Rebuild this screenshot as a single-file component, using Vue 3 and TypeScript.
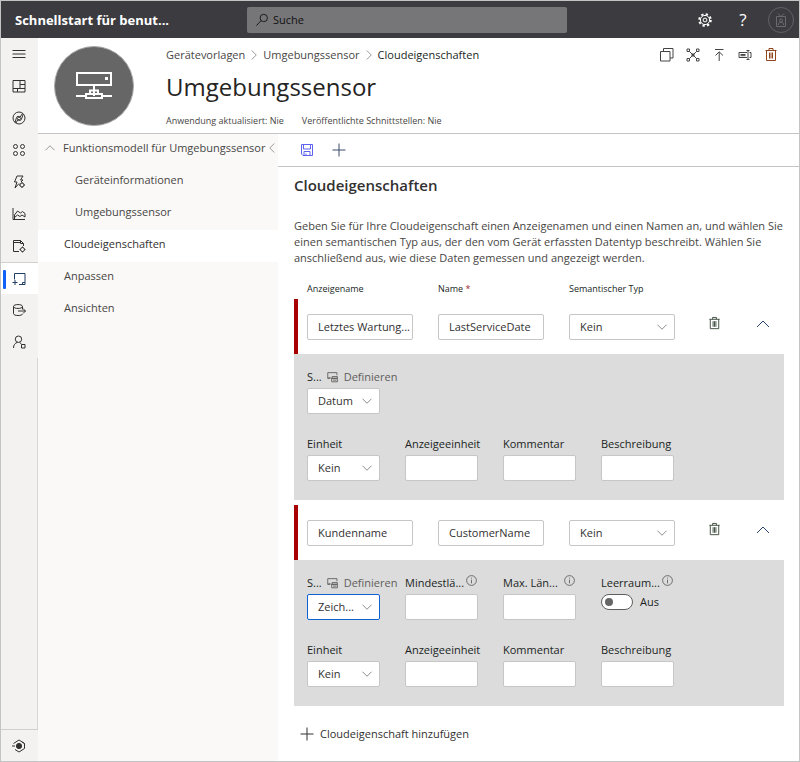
<script setup lang="ts">
import { ref } from 'vue'

interface RailItem { label: string; icon: string; active?: boolean }
interface NavItem { label: string; nested?: boolean; active?: boolean }
interface Field { label: string; kind: 'select' | 'text' | 'toggle'; value?: string; define?: boolean; info?: boolean; focused?: boolean }
interface Property { id: string; title: string; name: string; semantic: string; schema: Field[]; details: Field[] }

const icons: Record<string, string> = {
  menu: 'M1.5 4.5h13M1.5 8h13M1.5 11.5h13',
  dashboard: 'M2 2.5h12v11.5H2zM9 2.5v8M2 10.5h12M9 6.5h5M6.5 10.5v3.5',
  devices: 'M8 2a6 6 0 1 0 0 12a6 6 0 1 0 0-12M4 12.5l1.5-5c.5-1.5 2.5-1.5 3.5-.2l2.5-4M12.3 4l-2 5.500c-.8 1.600-2.600 1.200-3.400 0L5 13M6.500 8.500a1.500 1.500 0 1 0 3 0a1.500 1.500 0 1 0-3 0',
  groups: 'M4.500 2.500a2 2 0 1 0 0 4a2 2 0 1 0 0-4M11.500 2.500a2 2 0 1 0 0 4a2 2 0 1 0 0-4M4.500 9.500a2 2 0 1 0 0 4a2 2 0 1 0 0-4M11.500 9.500a2 2 0 1 0 0 4a2 2 0 1 0 0-4',
  rules: 'M12 2H6L3.500 8H6l-2 6l4-4.500M12 2L9.500 6H12l-2 2M11 9a2 2 0 1 0 0 4a2 2 0 1 0 0-4M11 8v1M11 13v1M8 11h1M13 11h1',
  analytics: 'M2 2v11.500h12M3.500 9l3-4l3 2l2-1.500l2.500 2M3.500 11.500l3-2.500l2.500 1.500l2-1.500l3 2V7.500M3.500 9v4',
  jobs: 'M8 13.500H2.500V2.500h7l3 3V8M2.500 4.500h7M9.500 2.500v3h3M11.500 9.500a2 2 0 1 0 0 4a2 2 0 1 0 0-4M11.500 8.500v1M11.500 13.500v1M8.500 11.500h1M13.500 11.500h1',
  templates: 'M3.500 8.500V2.500h10.500v11H8M1.500 11.500h5M4 9v5M11.500 13.500v-2H14',
  export: 'M2.500 4.500c0-2.600 9-2.600 9 0s-9 2.600-9 0v7c0 1.300 2 2 4.500 2s4.500-.7 4.500-1.500M11.500 4.500v3M7 9h7.500M12 6.500l2.500 2.500l-2.500 2.500',
  admin: 'M7.500 2a3.200 3.200 0 1 0 0 6.400a3.200 3.200 0 1 0 0-6.400M2.500 14c0-3 1.500-5 4-5.600M8.500 8.400l2 1.600M10.500 10.500h3.500v3.500h-3.500z',
  copy: 'M1.500 4.500h9.500v9.500h-9.500zM4.500 4.500v-3h9.500v9.500h-3',
  relations: 'M4.500 4.500l7 7M11.500 4.500l-7 7M2 2h2.500v2.500H2zM11.500 2H14v2.500h-2.500zM2 11.500h2.500V14H2zM11.500 11.500H14V14h-2.500zM7 7h2v2H7z',
  upload: 'M4 2.500h8.500M8.200 14V5M4.500 8.500l3.700-3.700L12 8.500',
  rename: 'M10 5.500H2v5h8M12.500 5.500h1.500v5h-1.500M3.500 7.500h5M3.500 8.700h5M9.500 3.500h3M11 3.500v9M9.500 12.500h3',
  trash: 'M2.500 3.500h11M3.500 3.500v10h9v-10M6 3.500v-2h4v2M6.500 5.500v6M8 5.500v6M9.500 5.500v6',
  save: 'M2.500 2.500h11v11h-9.500l-1.500-1.500zM4.500 2.500v4.500h7V2.500M5 13.500v-4h6v4M7 11.500v2',
  plus: 'M8 1.500v13M1.500 8h13',
  up: 'M2 11l6-6l6 6',
  down: 'M2 5l6 6l6-6',
  right: 'M5 2l6 6l-6 6',
  left: 'M11 2l-6 6l6 6',
  define: 'M5 9.500H2v-6.500h10.500v3M2 9.500l3-1M7 7.500h6v2H7zM5.500 9.500h7.500v4H6.500v-4M8 11.500h4',
  info: 'M8 2a6 6 0 1 0 0 12a6 6 0 1 0 0-12M8 7v4.500M8 4.500v1.200',
  search: 'M10 1.500a4.200 4.200 0 1 0 0 8.400a4.200 4.200 0 1 0 0-8.400M7 8.700L1.500 14.500',
  home: 'M2.500 5.500L8 2l5.500 3.500v5L8 14l-4-2.500M1 8h3M13.500 5.500l-2.500-1.500',
}

const rail: RailItem[] = [
  { label: 'Menü', icon: 'menu' },
  { label: 'Dashboard', icon: 'dashboard' },
  { label: 'Geräte', icon: 'devices' },
  { label: 'Gerätegruppen', icon: 'groups' },
  { label: 'Regeln', icon: 'rules' },
  { label: 'Analyse', icon: 'analytics' },
  { label: 'Aufträge', icon: 'jobs' },
  { label: 'Gerätevorlagen', icon: 'templates', active: true },
  { label: 'Datenexport', icon: 'export' },
  { label: 'Verwaltung', icon: 'admin' },
]

const actions = [
  { label: 'Kopieren', icon: 'copy' },
  { label: 'Beziehungen', icon: 'relations' },
  { label: 'Veröffentlichen', icon: 'upload' },
  { label: 'Umbenennen', icon: 'rename' },
  { label: 'Löschen', icon: 'trash' },
]

const nav: NavItem[] = [
  { label: 'Funktionsmodell für Umgebungssensor' },
  { label: 'Geräteinformationen', nested: true },
  { label: 'Umgebungssensor', nested: true },
  { label: 'Cloudeigenschaften', active: true },
  { label: 'Anpassen' },
  { label: 'Ansichten' },
]

const unitFields: Field[] = [
  { label: 'Einheit', kind: 'select', value: 'Kein' },
  { label: 'Anzeigeeinheit', kind: 'text' },
  { label: 'Kommentar', kind: 'text' },
  { label: 'Beschreibung', kind: 'text' },
]

const properties = ref<Property[]>([
  {
    id: 'service', title: 'Letztes Wartung...', name: 'LastServiceDate', semantic: 'Kein',
    schema: [{ label: 'S...', kind: 'select', value: 'Datum', define: true }],
    details: unitFields.map((f) => ({ ...f })),
  },
  {
    id: 'customer', title: 'Kundenname', name: 'CustomerName', semantic: 'Kein',
    schema: [
      { label: 'S...', kind: 'select', value: 'Zeich...', define: true, focused: true },
      { label: 'Mindestlä...', kind: 'text', info: true },
      { label: 'Max. Län...', kind: 'text', info: true },
      { label: 'Leerraum...', kind: 'toggle', info: true },
    ],
    details: unitFields.map((f) => ({ ...f })),
  },
])
const trim = ref(false)
</script>

<template>
  <div class="app">
    <header class="topbar">
      <strong class="brand">Schnellstart für benut...</strong>
      <label class="search">
        <svg class="icon" viewBox="0 0 16 16"><path :d="icons.search" /></svg>
        <input type="search" placeholder="Suche" aria-label="Suche" />
      </label>
      <div class="tools">
        <button type="button" aria-label="Einstellungen">
          <svg class="gear" viewBox="0 0 16 16">
            <circle cx="8" cy="8" r="5.800" class="teeth" />
            <circle cx="8" cy="8" r="4.600" />
            <circle cx="8" cy="8" r="1.900" />
          </svg>
        </button>
        <button type="button" class="help" aria-label="Hilfe">?</button>
        <button type="button" class="avatar" aria-label="Konto">
          <svg viewBox="0 0 16 16"><path d="M3.500 4.500h9v10h-9zM5 1.500l3 3l3-3M5.500 13v-1.500c1-1.500 4-1.500 5 0V13M8 7a1.500 1.500 0 1 0 0 3a1.500 1.500 0 1 0 0-3" /></svg>
        </button>
      </div>
    </header>

    <div class="shell">
      <nav class="rail" aria-label="Hauptnavigation">
        <button v-for="item in rail" :key="item.icon" type="button" :class="{ active: item.active }" :aria-label="item.label">
          <svg class="icon" viewBox="0 0 16 16"><path :d="icons[item.icon]" /></svg>
        </button>
        <div class="rail-space"></div>
        <button type="button" class="rail-home" aria-label="Startseite">
          <svg class="icon" viewBox="0 0 16 16"><path :d="icons.home" /><circle cx="8" cy="8" r="2.600" class="dot" /></svg>
        </button>
      </nav>

      <main class="main">
        <section class="hero">
          <div class="emblem">
            <svg viewBox="0 0 40 32">
              <path d="M3 3h34v12H3zM20 16v4M16 24v-3.500h8V24M2 26h10M28 26h10M12 24h16v4H12zM20 20v6" />
              <rect x="31" y="7" width="3" height="3" class="lamp" />
            </svg>
          </div>
          <div class="hero-text">
            <div class="crumbs">
              <a href="#vorlagen">Gerätevorlagen</a>
              <svg viewBox="0 0 16 16"><path :d="icons.right" /></svg>
              <a href="#sensor">Umgebungssensor</a>
              <svg viewBox="0 0 16 16"><path :d="icons.right" /></svg>
              <span>Cloudeigenschaften</span>
            </div>
            <h1>Umgebungssensor</h1>
            <p class="meta"><span>Anwendung aktualisiert: Nie</span><span>Veröffentlichte Schnittstellen: Nie</span></p>
          </div>
          <div class="actions">
            <button v-for="a in actions" :key="a.icon" type="button" :class="a.icon" :aria-label="a.label">
              <svg class="icon" viewBox="0 0 16 16"><path :d="icons[a.icon]" /></svg>
            </button>
          </div>
        </section>

        <div class="workspace">
          <nav class="tree" aria-label="Vorlage">
            <a v-for="(item, i) in nav" :key="i" href="#" :class="{ nested: item.nested, active: item.active }">
              <svg v-if="i === 0" class="caret" viewBox="0 0 16 16"><path :d="icons.up" /></svg>
              <span>{{ item.label }}</span>
              <svg v-if="i === 0" class="collapse" viewBox="0 0 16 16"><path :d="icons.left" /></svg>
            </a>
          </nav>

          <section class="content">
            <div class="toolbar">
              <button type="button" class="save" aria-label="Speichern"><svg class="icon" viewBox="0 0 16 16"><path :d="icons.save" /></svg></button>
              <button type="button" aria-label="Hinzufügen"><svg class="icon" viewBox="0 0 16 16"><path :d="icons.plus" /></svg></button>
            </div>
            <div class="page">
              <h2>Cloudeigenschaften</h2>
              <p class="intro">Geben Sie für Ihre Cloudeigenschaft einen Anzeigenamen und einen Namen an, und wählen Sie einen semantischen Typ aus, der den vom Gerät erfassten Datentyp beschreibt. Wählen Sie anschließend aus, wie diese Daten gemessen und angezeigt werden.</p>

              <div class="row heads">
                <span>Anzeigename</span>
                <span>Name <em>*</em></span>
                <span>Semantischer Typ</span>
              </div>

              <article v-for="p in properties" :key="p.id" class="property">
                <div class="row summary">
                  <input v-model="p.title" type="text" aria-label="Anzeigename" />
                  <input v-model="p.name" type="text" aria-label="Name" />
                  <div class="pick">
                    <select aria-label="Semantischer Typ"><option>{{ p.semantic }}</option></select>
                    <svg viewBox="0 0 16 16"><path :d="icons.down" /></svg>
                  </div>
                  <button type="button" class="delete" aria-label="Löschen"><svg class="icon" viewBox="0 0 16 16"><path :d="icons.trash" /></svg></button>
                  <button type="button" class="fold" aria-label="Zuklappen"><svg class="icon" viewBox="0 0 16 16"><path :d="icons.up" /></svg></button>
                </div>
                <div class="panel">
                  <div v-for="(group, g) in [p.schema, p.details]" :key="g" class="fields">
                    <div v-for="(f, i) in group" :key="i" class="field">
                      <div class="caption">
                        <label :for="`${p.id}-${g}-${i}`">{{ f.label }}</label>
                        <button v-if="f.define" type="button" class="define">
                          <svg viewBox="0 0 16 16"><path :d="icons.define" /></svg>Definieren
                        </button>
                        <svg v-if="f.info" class="info" viewBox="0 0 16 16"><path :d="icons.info" /></svg>
                      </div>
                      <div v-if="f.kind === 'select'" class="pick" :class="{ focused: f.focused }">
                        <select :id="`${p.id}-${g}-${i}`"><option>{{ f.value }}</option></select>
                        <svg viewBox="0 0 16 16"><path :d="icons.down" /></svg>
                      </div>
                      <input v-else-if="f.kind === 'text'" :id="`${p.id}-${g}-${i}`" type="text" />
                      <div v-else class="toggle">
                        <input :id="`${p.id}-${g}-${i}`" v-model="trim" type="checkbox" role="switch" />
                        <span>{{ trim ? 'Ein' : 'Aus' }}</span>
                      </div>
                    </div>
                  </div>
                </div>
              </article>

              <button type="button" class="add">
                <svg class="icon" viewBox="0 0 16 16"><path :d="icons.plus" /></svg>Cloudeigenschaft hinzufügen
              </button>
            </div>
          </section>
        </div>
      </main>
    </div>
  </div>
</template>

<style>
body { margin: 0; background: #fff; }
</style>

<style scoped>
* { box-sizing: border-box; }
.app {
  min-height: 100vh; display: flex; flex-direction: column;
  border: 1px solid #c3c5c5; background: #fff; color: #323130;
  font: 11px/16px "Open Sans", "Noto Sans", sans-serif;
}
button { display: flex; align-items: center; justify-content: center; padding: 0; border: 0; background: none; color: inherit; font: inherit; }
a { color: inherit; text-decoration: none; }
h1, h2, p { margin: 0; }
svg { display: block; flex: none; fill: none; stroke: currentColor; stroke-width: 1; }
.icon { width: 16px; height: 16px; }

.topbar { height: 37px; display: flex; align-items: center; background: #3c3b40; color: #fff; }
.brand { flex: none; width: 246px; padding-left: 14px; font-size: 13px; font-weight: 700; white-space: nowrap; }
.search { flex: 0 1 320px; min-width: 0; height: 26px; display: flex; align-items: center; gap: 2px; padding-left: 8px; border-radius: 2px; background: #767678; color: #111; }
.search .icon { width: 14px; height: 14px; }
.search input { min-width: 0; flex: 1; border: 0; outline: 0; background: none; font: inherit; color: #111; }
.search input::placeholder { color: #111; opacity: 1; }
.tools { margin-left: auto; display: flex; align-items: center; gap: 12px; padding-right: 5px; }
.tools button { width: 26px; height: 26px; }
.gear { width: 16px; height: 16px; }
.gear .teeth { stroke-width: 2; stroke-dasharray: 2.300 2.255; }
.help { font-size: 17px; }
.tools .avatar { border: 1px solid #626165; border-radius: 50%; color: #6b6a6e; }
.avatar svg { width: 16px; height: 16px; }

.shell { flex: 1; display: flex; }
.rail { flex: none; width: 37px; display: flex; flex-direction: column; background: #f3f2f1; }
.rail button { height: 32px; flex: none; padding-right: 1px; }
.rail .active { position: relative; background: #fff; border-top: 1px solid #d2d0ce; color: #1e3f63; }
.rail .active::before { content: ""; position: absolute; left: 2px; top: 7px; width: 3px; height: 19px; border-radius: 1px; background: #0f62f5; }
.rail-space { flex: 1; border-right: 1px solid #d8d6d4; }
.rail .rail-home { border-top: 1px solid #d2d0ce; }
.dot { fill: currentColor; }

.main { flex: 1; min-width: 0; display: flex; flex-direction: column; }
.hero { height: 96px; display: flex; padding: 8px 20px 0 16px; border-bottom: 1px solid #c4c4c4; }
.emblem { flex: none; width: 80px; height: 80px; display: grid; place-items: center; border: 1px solid #aaa; border-radius: 50%; background: #666; color: #fff; }
.emblem svg { width: 40px; height: 32px; stroke-width: 2; }
.lamp { fill: #fff; stroke: none; }
.hero-text { flex: 1; min-width: 0; padding-left: 32px; white-space: nowrap; }
.crumbs { display: flex; align-items: center; gap: 3px; height: 18px; color: #484644; }
.crumbs svg { width: 12px; height: 12px; color: #777; }
.crumbs span { color: #201f1e; }
h1 { padding-top: 8px; font-size: 24px; line-height: 30px; font-weight: 400; color: #252423; }
.meta { display: flex; gap: 18px; padding-top: 11px; font-size: 9px; line-height: 16px; color: #484644; }
.actions { display: flex; gap: 10px; height: 18px; align-items: center; color: #444; }
.actions .trash { color: #8f451c; }

.workspace { flex: 1; display: flex; min-width: 0; }
.tree { flex: none; width: 240px; background: #faf9f8; color: #484644; }
.tree a { height: 32px; display: flex; align-items: center; padding: 0 0 4px 26px; white-space: nowrap; }
.tree .nested { padding-left: 37px; }
.tree .active { background: #fff; color: #323130; }
.tree .caret { width: 12px; height: 12px; margin-left: -20px; margin-right: 7px; color: #777; }
.tree .collapse { width: 12px; height: 12px; margin-left: auto; color: #777; }
.content { flex: 1; min-width: 0; }
.toolbar { height: 33px; display: flex; align-items: center; gap: 16px; padding-left: 21px; border-bottom: 1px solid #c4c4c4; color: #3a4a68; }
.toolbar .save { color: #5e62ee; }
.page { padding: 7px 15px 16px 16px; }
h2 { font-size: 15px; line-height: 22px; font-weight: 600; }
.intro { padding-top: 22px; color: #484644; }
.row { display: grid; grid-template-columns: repeat(3, 106px) 28px 20px; column-gap: 25px; padding-left: 13px; align-items: center; }
.heads { height: 33px; padding-top: 12px; font-size: 9px; color: #201f1e; }
.heads em { color: #a4262c; font-style: normal; }
.property { margin-bottom: 5px; }
.summary { height: 55px; border-left: 4px solid #a80000; padding-left: 9px; }
.summary .delete { padding-bottom: 6px; color: #3b4a3c; }
.delete .icon { width: 15px; height: 15px; }
.summary .fold { padding-bottom: 6px; color: #2a4470; }
input[type="text"], select {
  width: 100%; min-width: 0; height: 26px; padding: 0 0 0 10px; border: 1px solid #c8c6c4; border-radius: 2px;
  background: #fff; color: #323130; font: inherit; outline: 0;
}
select { appearance: none; }
.pick { position: relative; }
.pick svg { position: absolute; right: 7px; top: 7px; width: 12px; height: 12px; color: #666; pointer-events: none; }
.pick.focused select { border-color: #0f62d5; }
.panel { height: 146px; display: grid; grid-template-rows: 67px 1fr; padding: 13px 12px 0 13px; background: #dcdcdc; color: #201f1e; }
.fields { display: grid; grid-template-columns: repeat(4, 73px); column-gap: 25px; align-content: start; }
.caption { height: 21px; display: flex; align-items: center; padding-bottom: 2px; white-space: nowrap; }
.define { gap: 4px; margin-left: 4px; color: #605e5c; }
.define svg { width: 14px; height: 14px; }
.info { width: 13px; height: 13px; margin-left: auto; margin-bottom: 4px; color: #555; }
.toggle { display: flex; align-items: center; gap: 7px; }
.toggle input { appearance: none; flex: none; width: 32px; height: 16px; margin: 0; padding: 3px; border: 1px solid #605e5c; border-radius: 8px; background: #fff; }
.toggle input::before { content: ""; display: block; width: 8px; height: 8px; border-radius: 50%; background: #666; }
.toggle input:checked::before { margin-left: auto; }
.add { margin-top: 20px; padding-left: 5px; gap: 5px; }
</style>
